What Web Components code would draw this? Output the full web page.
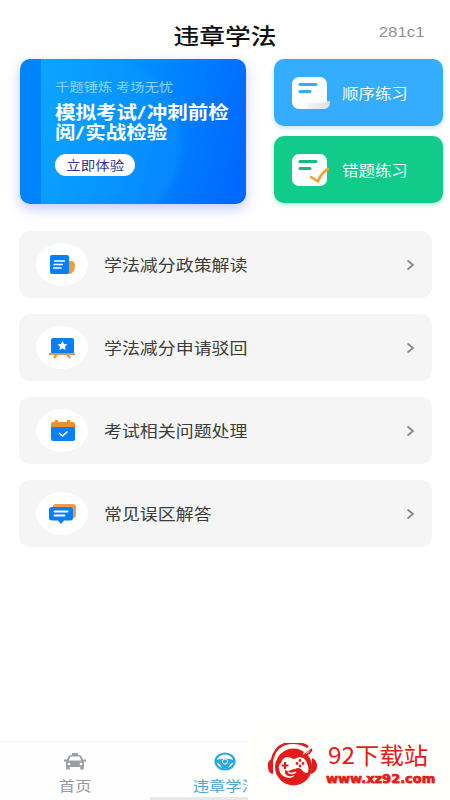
<!DOCTYPE html>
<html lang="zh-CN">
<head>
<meta charset="utf-8">
<title>违章学法</title>
<style>
html,body{margin:0;background:#fff}
body{width:450px;height:800px;overflow:hidden;font-family:"Noto Sans CJK SC","Noto Sans",sans-serif}
</style>
</head>
<body>
<study-app></study-app>
<script>
const define = (name, html) => {
  const t = document.createElement('template');
  t.innerHTML = html;
  customElements.define(name, class extends HTMLElement {
    constructor() {
      super();
      this.attachShadow({mode: 'open'}).append(t.content.cloneNode(true));
    }
  });
};

/* Text set a little wider than its natural width */
define('wide-text', `<style>
:host{display:block;white-space:nowrap;line-height:1.2}
span{display:inline-block;transform:scaleX(var(--sx,1.15));transform-origin:var(--origin,left center)}
</style><span><slot></slot></span>`);

define('page-header', `<style>
:host{display:grid;grid-template-columns:1fr auto 1fr;height:59px;color:#111;box-sizing:border-box}
.title{grid-column:2;--sx:1.17;--origin:center;font-size:22px;font-weight:500;margin-top:21px}
.id{justify-self:end;margin:22px 25px 0 0;font:14.5px/20px "Liberation Sans",sans-serif;color:#929292;--sx:1.16;--origin:right center}
</style><wide-text class="title"><slot></slot></wide-text><wide-text class="id"><slot name="id"></slot></wide-text>`);

define('exam-banner', `<style>
:host{display:block;position:relative;box-sizing:border-box;width:226px;height:145px;padding:20px 0 0 35px;border-radius:10px;color:#fff;
background:linear-gradient(90deg,#0084fb 0 21px,transparent 21px),radial-gradient(circle at 72px 84px,#18a2ff40 0 86px,transparent 93px),linear-gradient(105deg,#08a5ff 10%,#0090ff 45%,#0068ff 95%);
box-shadow:0 5px 13px #5a5cff55}
.sub{font-size:12.4px;color:#8dd2ff;--sx:1.16;line-height:17px}
.main{font-family:"Liberation Sans","Noto Sans CJK SC",sans-serif;font-size:17.7px;font-weight:700;line-height:20.500px;--sx:1.158}
.first{margin-top:6.500px}
.btn{width:80px;height:22px;margin-top:10.500px;border-radius:11px;background:#fff;color:#37358b;font-size:12.6px;display:flex;justify-content:center;align-items:center;--origin:center}
</style><wide-text class="sub"><slot name="sub"></slot></wide-text><wide-text class="main first"><slot name="line1"></slot></wide-text><wide-text class="main"><slot name="line2"></slot></wide-text><div class="btn"><wide-text><slot name="action"></slot></wide-text></div>`);

define('practice-button', `<style>
:host{display:flex;align-items:center;box-sizing:border-box;width:169px;height:67px;padding-left:17px;border-radius:10px;color:#effcff;background:var(--bg);box-shadow:0 2px 5px var(--glow)}
.icon{width:39px;height:34px;flex:none}
wide-text{font-size:14.3px;margin-left:11.500px}
</style><div class="icon"><slot name="icon"></slot></div><wide-text><slot></slot></wide-text>`);

define('topic-row', `<style>
:host{display:flex;align-items:center;box-sizing:border-box;width:413px;height:67px;padding:0 17px;border-radius:11px;background:#f5f5f5;color:#3c3c3c}
.disc{width:52px;height:43px;border-radius:50%;background:#fff;display:grid;place-items:center}
wide-text{font-size:15.6px;line-height:19px;margin-left:15.500px;flex:1}
svg{width:9px;height:12px}
</style><div class="disc"><slot name="icon"></slot></div><wide-text><slot></slot></wide-text>
<svg viewBox="0 0 9 12"><path d="M1.5 1.5 7 6l-5.500 4.500" fill="none" stroke="#858585" stroke-width="1.700"/></svg>`);

define('tab-item', `<style>
:host{display:flex;flex-direction:column;align-items:center;width:150px;padding-top:9px;box-sizing:border-box;color:var(--tab,#999)}
.icon{height:20px}
wide-text{font-size:14.200px;--origin:center;margin-top:6px}
</style><div class="icon"><slot name="icon"></slot></div><wide-text><slot></slot></wide-text>`);

define('site-badge', `<style>
:host{display:flex;position:absolute;right:0;bottom:0;width:202px;height:76px;background:#fffffb;box-sizing:border-box;padding:19px 0 0 20px;color:#e21b1b}
.logo{width:50px;height:44px;flex:none}
.copy{display:flex;flex-direction:column}
.name{font-size:23px;line-height:26px;--sx:1.06;margin-left:10px;margin-top:-2px}
.url{font:bold 12.5px/15px "DejaVu Sans","Liberation Sans",sans-serif;-webkit-text-stroke:.7px #e21b1b;--sx:1.04;margin:4px 0 0 8px;text-shadow:1px 1px 1px #0003}
</style><div class="logo"><svg width="50" height="44" viewBox="0 0 50 44">
<ellipse cx="25.500" cy="24" rx="18.500" ry="18.500" fill="#e51b1b"/>
<path d="M4 17C9-5 32-2 40 4" fill="none" stroke="#e51b1b" stroke-width="2.600"/>
<path d="M7 18C12 1 29 1 38 8" fill="none" stroke="#fffffb" stroke-width="2"/>
<path d="M5 16q-6 1-5 8 0 6 5 7zM44 15q5 2 5 8t-6 8z" fill="#e51b1b"/>
<path d="M34 13q4-5 10-7M37 13q5-3 7-6" fill="none" stroke="#e51b1b" stroke-width="1.600"/>
<path d="M35 11 43 5" stroke="#fffffb" stroke-width="1.300"/>
<path d="M13 20q1-5 6-6 4 0 6 2 3 0 6-2 6 0 8 6 3 8 0 10-3 0-6-4-3-2-6 0 2 8-6 9-9-1-10-9-1-4 2-6Z" fill="#fffffb"/>
<path d="M17 27q-1 7 7 6 6-1 5-6-2-2-6 0-3 2-6 0Z" fill="#e51b1b"/>
<path d="M20 29q3 3 8 0" fill="none" stroke="#fffffb" stroke-width="1.600"/>
<path d="M13.500 22.500h7m-3.500-3.500v7" stroke="#e51b1b" stroke-width="2"/>
<g fill="#e51b1b"><circle cx="32" cy="17.500" r="1.400"/><circle cx="32" cy="23" r="1.400"/><circle cx="29" cy="20.500" r="1.400"/><circle cx="35" cy="20.500" r="1.400"/></g>
</svg></div><div class="copy"><wide-text class="name"><slot></slot></wide-text><wide-text class="url"><slot name="url"></slot></wide-text></div>`);

define('study-app', `<style>
:host{display:flex;flex-direction:column;position:relative;width:450px;height:800px;overflow:hidden;background:#fff}
.top{display:flex;justify-content:space-between;padding:0 7px 0 20px}
.side{display:flex;flex-direction:column;gap:10px}
.list{display:flex;flex-direction:column;gap:16px;padding:27px 0 0 19px}
.slash{display:inline-block;transform:skewX(-12deg);margin:0 2px 0 1.500px}
nav{display:flex;height:59px;margin-top:auto;border-top:1px solid #f2f2f2;box-sizing:border-box;background:linear-gradient(#e8e8e8,#e8e8e8) 150px 100%/300px 3px no-repeat,#fefefe}
svg{display:block}
</style>
<page-header>违章学法<span slot="id">281c1</span></page-header>
<div class="top">
<exam-banner><span slot="sub">千题锤炼 考场无忧</span><span slot="line1">模拟考试<span class="slash">/</span>冲刺前检</span><span slot="line2">阅<span class="slash">/</span>实战检验</span><span slot="action">立即体验</span></exam-banner>
<div class="side">
<practice-button style="--bg:#34adff;--glow:#34adff55"><svg slot="icon" width="39" height="34" viewBox="0 0 39 34"><defs><linearGradient id="curl"><stop stop-color="#f2f5f9"/><stop offset="1" stop-color="#d9e2eb"/></linearGradient></defs><rect x="1" y="1" width="35" height="32" rx="7" fill="#fff"/><path d="M9 8.500h16M9 15.500h10" stroke="#34adff" stroke-width="3.200" stroke-linecap="round"/><path d="M13 33q5-1 4-6 12 1 22-2 0 8-6 8Z" fill="url(#curl)"/></svg>顺序练习</practice-button>
<practice-button style="--bg:#11cb8b;--glow:#11cb8b55"><svg slot="icon" width="39" height="34" viewBox="0 0 39 34"><rect x="1" y="1" width="35" height="32" rx="7" fill="#fff"/><path d="M9 8.500h16M9 15.500h10" stroke="#11bc82" stroke-width="3.200" stroke-linecap="round"/><path d="m20 24 7 4.500Q30 20 37 16" fill="none" stroke="#f3a32c" stroke-width="2.600" stroke-linecap="round" stroke-linejoin="round"/></svg>错题练习</practice-button>
</div></div>
<div class="list">
<topic-row><svg slot="icon" width="28" height="22" viewBox="0 0 28 22"><path d="M18 7h5q4 0 4 5-1 8-6 8h-3z" fill="#f09a3a"/><rect x="2" y="1" width="19" height="19" rx="2" fill="#087ff5"/><path d="M6 7h11M5.500 10.500h9.500M5 14h8.500" stroke="#fff" stroke-width="1.400"/></svg>学法减分政策解读</topic-row>
<topic-row><svg slot="icon" width="28" height="22" viewBox="0 0 28 22"><path d="m9 17-3 4m13-4 3 4" stroke="#f09a3a" stroke-width="2.500"/><rect x="3" y="1" width="23" height="16" rx="2" fill="#087ff5"/><path d="M1 17h26" stroke="#d99757" stroke-width="2"/><path d="m14.500 4 1.500 3.100 3.500.4-2.600 2.300.7 3.300-3.100-1.700-3.100 1.700.7-3.300-2.600-2.300 3.500-.4z" fill="#fff"/></svg>学法减分申请驳回</topic-row>
<topic-row><svg slot="icon" width="28" height="22" viewBox="0 0 28 22"><rect x="3" y="2" width="24" height="10" rx="2" fill="#e99131"/><path d="M8.500 0v5M20.500 0v5" stroke="#e99131" stroke-width="3"/><path d="M3 7h24v12q0 2-2 2H5q-2 0-2-2z" fill="#0880fa"/><path d="m11 13 3.500 3 5-4.500" fill="none" stroke="#fff" stroke-width="1.500"/></svg>考试相关问题处理</topic-row>
<topic-row><svg slot="icon" width="28" height="22" viewBox="0 0 28 22"><rect x="5" y="1" width="23" height="14" rx="3" fill="#ee9953"/><path d="M4 4h18q3 0 3 3v8q0 2.500-3 2.500h-6L13 21l-3-3.500H4q-3 0-3-2.500V7q0-3 3-3z" fill="#087ff8"/><path d="M6.500 8.500h13M6.500 12.500h10" stroke="#fff" stroke-width="1.900" stroke-linecap="round"/></svg>常见误区解答</topic-row>
</div>
<nav>
<tab-item><svg slot="icon" width="22" height="20" viewBox="0 0 22 20"><path d="M8 2h6v2H8zM2 11 4.500 5.500Q5 4 7 4h8q2 0 2.500 1.500L20 11v5H2z" fill="#9b9fa1"/><path d="M6.500 5.500h9l1.800 4H4.700z" fill="#fff"/><path d="M0 9.500h3m16 0h3" stroke="#9b9fa1" stroke-width="2"/><path d="M4 14v4.500m14-4.500v4.500" stroke="#9b9fa1" stroke-width="3.500"/><circle cx="5" cy="13" r="1.300" fill="#fff"/><circle cx="17" cy="13" r="1.300" fill="#fff"/></svg>首页</tab-item>
<tab-item style="--tab:#4da5cf"><svg slot="icon" width="22" height="20" viewBox="0 0 22 20"><ellipse cx="11" cy="10.500" rx="9.500" ry="8" fill="none" stroke="#28a8df" stroke-width="2.200"/><path d="M2 9q9-3 18 0v2.500q-4 0-6 6H8q-2-6-6-6z" fill="#28a8df"/><circle cx="11" cy="10.500" r="2.600" fill="#28a8df" stroke="#fff"/></svg>违章学法</tab-item>
</nav>
<site-badge>92下载站<span slot="url">www.xz92.com</span></site-badge>`);
</script>
</body>
</html>
